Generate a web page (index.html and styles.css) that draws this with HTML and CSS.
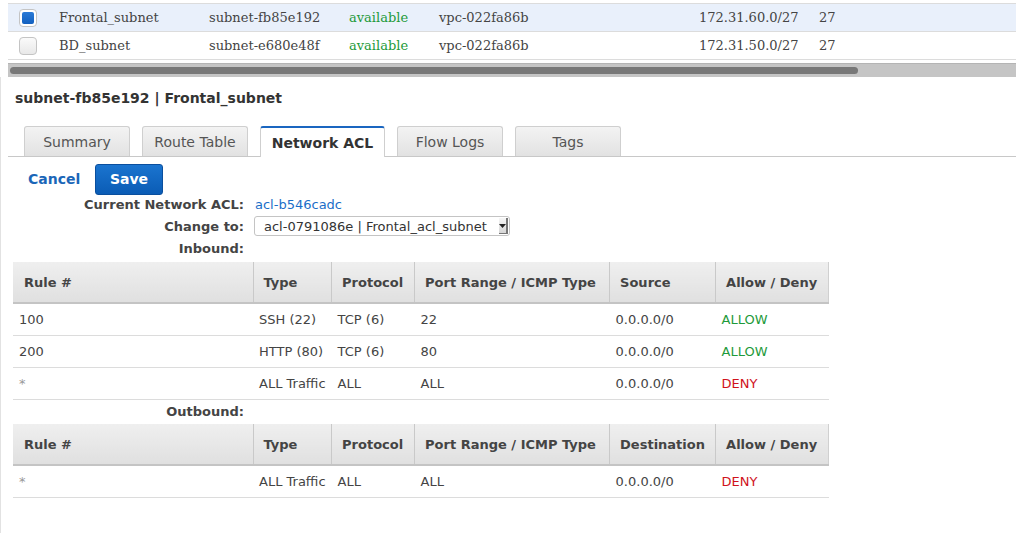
FILE: index.html
```html
<!DOCTYPE html>
<html>
<head>
<meta charset="utf-8">
<link rel="stylesheet" href="styles.css">
</head>
<body>
<div class="top">
  <table class="subnets">
    <tr class="sel">
      <td class="c-chk"><span class="chk on"></span></td>
      <td class="c-name">Frontal_subnet</td>
      <td class="c-id">subnet-fb85e192</td>
      <td class="c-state">available</td>
      <td class="c-vpc">vpc-022fa86b</td>
      <td class="c-cidr">172.31.60.0/27</td>
      <td class="c-num">27</td>
    </tr>
    <tr>
      <td class="c-chk"><span class="chk"></span></td>
      <td class="c-name">BD_subnet</td>
      <td class="c-id">subnet-e680e48f</td>
      <td class="c-state">available</td>
      <td class="c-vpc">vpc-022fa86b</td>
      <td class="c-cidr">172.31.50.0/27</td>
      <td class="c-num">27</td>
    </tr>
  </table>
  <div class="hscroll"><div class="thumb"></div></div>
</div>
<div class="panel">
  <h2 class="title">subnet-fb85e192 | Frontal_subnet</h2>
  <div class="tabs">
    <div class="tab">Summary</div>
    <div class="tab">Route Table</div>
    <div class="tab active">Network ACL</div>
    <div class="tab">Flow Logs</div>
    <div class="tab">Tags</div>
  </div>
  <div class="actions">
    <a class="cancel">Cancel</a>
    <button class="save">Save</button>
  </div>
  <div class="form first">
    <div class="frow"><span class="lbl">Current Network ACL:</span><a class="link">acl-b546cadc</a></div>
    <div class="frow"><span class="lbl">Change to:</span>
      <div class="select"><span>acl-0791086e | Frontal_acl_subnet</span><span class="arrow"><svg width="7" height="4" viewBox="0 0 7 4"><path d="M0 0h7L3.5 4z" fill="#222"/></svg></span></div>
    </div>
    <div class="frow tall"><span class="lbl">Inbound:</span></div>
  </div>
  <table class="acl">
    <thead>
      <tr><th class="w-rule">Rule #</th><th class="w-type">Type</th><th class="w-proto">Protocol</th><th class="w-port">Port Range / ICMP Type</th><th class="w-src">Source</th><th class="w-ad">Allow / Deny</th></tr>
    </thead>
    <tbody>
      <tr><td>100</td><td>SSH (22)</td><td>TCP (6)</td><td>22</td><td>0.0.0.0/0</td><td class="allow">ALLOW</td></tr>
      <tr><td>200</td><td>HTTP (80)</td><td>TCP (6)</td><td>80</td><td>0.0.0.0/0</td><td class="allow">ALLOW</td></tr>
      <tr><td class="star">*</td><td>ALL Traffic</td><td>ALL</td><td>ALL</td><td>0.0.0.0/0</td><td class="deny">DENY</td></tr>
    </tbody>
  </table>
  <div class="form"><div class="frow"><span class="lbl">Outbound:</span></div></div>
  <table class="acl">
    <thead>
      <tr><th class="w-rule">Rule #</th><th class="w-type">Type</th><th class="w-proto">Protocol</th><th class="w-port">Port Range / ICMP Type</th><th class="w-src">Destination</th><th class="w-ad">Allow / Deny</th></tr>
    </thead>
    <tbody>
      <tr><td class="star">*</td><td>ALL Traffic</td><td>ALL</td><td>ALL</td><td>0.0.0.0/0</td><td class="deny">DENY</td></tr>
    </tbody>
  </table>
</div>
</body>
</html>
```

FILE: styles.css
```css
html, body { margin: 0; padding: 0; background: #fff; }
body { width: 1016px; height: 533px; overflow: hidden; font-family: "DejaVu Sans", sans-serif; color: #444; }

.top { padding: 3px 0 0 8px; }
.subnets { border-collapse: collapse; width: 1008px; font-family: "DejaVu Serif", serif; font-size: 13px; color: #444; }
.subnets td { height: 27px; border-top: 1px solid #dcdcdc; padding: 0; white-space: nowrap; }
.subnets tr:last-child td { border-bottom: 1px solid #dcdcdc; }
.subnets tr.sel td { background: #e9f0fb; }
.subnets td.c-chk { width: 40px; padding-left: 11px; }
.c-name { width: 150px; }
.c-id { width: 140px; }
.c-state { width: 90px; color: #1e9a3a; }
.c-vpc { width: 260px; }
.c-cidr { width: 120px; }
.chk { display: block; width: 16px; height: 16px; border: 1px solid #c4c4c4; border-radius: 4px; background: linear-gradient(#fafafa, #e8e8e8); }
.chk.on { background: #fff; position: relative; }
.chk.on::after { content: ""; position: absolute; left: 2px; top: 2px; width: 12px; height: 12px; border-radius: 2px; background: linear-gradient(#2a7ad6, #1260c0); }

.hscroll { margin-top: 3px; height: 14px; background: #c5c5c5; border-top: 1px solid #b4b4b4; box-sizing: border-box; padding: 3px 0 0 2px; }
.thumb { width: 848px; height: 7px; background: #787878; border-radius: 4px; }

.panel { border-left: 1px solid #e2e2e2; padding: 12px 0 0 0; height: 460px; box-sizing: border-box; }
.title { margin: 0 0 0 14px; font-size: 14px; font-weight: bold; color: #333; line-height: 18px; }

.tabs { display: flex; gap: 12px; margin: 19px 0 0 7px; padding-left: 16px; border-bottom: 1px solid #c8c8c8; height: 30px; }
.tab { width: 104px; height: 29px; border: 1px solid #cfcfcf; border-bottom: none; border-radius: 3px 3px 0 0; background: linear-gradient(#f3f3f3, #e2e2e2); font-size: 14px; color: #555; display: flex; align-items: center; justify-content: center; }
.tab.active { width: 125px; margin-bottom: -1px; background: #fff; border-top: 2px solid #1a66c0; box-sizing: border-box; height: 31px; font-weight: bold; color: #333; padding-top: 1px; }

.actions { display: flex; align-items: center; margin: 6px 0 0 27px; height: 32px; }
.cancel { color: #1a66b8; font-weight: bold; font-size: 14px; width: 67px; }
.save { width: 68px; height: 31px; border: 1px solid #0a4f9e; border-radius: 3px; background: linear-gradient(#1a74cf, #0b5cb5); color: #fff; font-family: "DejaVu Sans", sans-serif; font-weight: bold; font-size: 14px; padding: 0; }

.form { font-size: 13px; }
.form.first { margin-top: -2px; }
.frow { display: flex; align-items: center; height: 22px; }
.frow.tall { height: 23px; }
.lbl { text-align: right; font-weight: bold; color: #444; padding-right: 11px; box-sizing: border-box; width: 254px; }
.link { color: #1a6ec8; }
.select { display: flex; align-items: center; justify-content: space-between; width: 256px; height: 20px; border: 1px solid #c4c4c4; border-radius: 3px; box-sizing: border-box; padding: 0 1px 0 9px; color: #333; font-size: 13px; margin-left: -1px; background: #fff; }
.arrow { width: 9px; height: 16px; background: linear-gradient(#f6f6f6, #d6d6d6); border-right: 2px solid #777; border-bottom: 1px solid #777; display: flex; align-items: center; justify-content: center; box-sizing: border-box; }

.acl { border-collapse: collapse; margin: 2px 0 0 12px; font-size: 13px; color: #444; }
.acl th { height: 41px; padding: 1px 6px 0 10px; text-align: left; font-weight: bold; color: #444; background: linear-gradient(#efefef, #e0e0e0); border-left: 1px solid #fff; border-right: 1px solid #c9c9c9; border-bottom: 2px solid #c4c4c4; white-space: nowrap; box-sizing: border-box; }
.acl th:first-child { border-left: none; padding-left: 11px; }
.acl th:last-child { border-right: 1px solid #d0d0d0; }
.acl td { height: 31px; padding: 0 6px; border-bottom: 1px solid #dcdcdc; white-space: nowrap; color: #444; }
.w-rule { width: 240px; }
.w-type { width: 78px; }
.w-proto { width: 83px; }
.w-port { width: 195px; }
.w-src { width: 106px; }
.w-ad { width: 113px; }
.allow { color: #1e9a3a !important; }
.deny { color: #d0121c !important; }
.star { color: #999 !important; }
```
